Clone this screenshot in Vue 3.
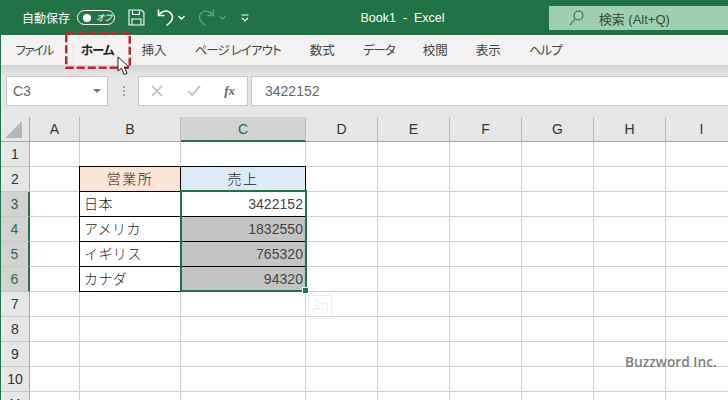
<script setup>
const tabs = [
  { t: 'ファイル', c: 'kana-tight' },
  { t: 'ホーム', c: 'kana active' },
  { t: '挿入', c: '' },
  { t: 'ページ レイアウト', c: 'kana-wide' },
  { t: '数式', c: '' },
  { t: 'データ', c: 'kana' },
  { t: '校閲', c: '' },
  { t: '表示', c: '' },
  { t: 'ヘルプ', c: 'kana' }
]
const cols = [
  { name: 'A', w: 50 }, { name: 'B', w: 101 }, { name: 'C', w: 125 }, { name: 'D', w: 72 },
  { name: 'E', w: 72 }, { name: 'F', w: 72 }, { name: 'G', w: 72 }, { name: 'H', w: 72 }, { name: 'I', w: 72 }
]
const rowNums = [1, 2, 3, 4, 5, 6, 7, 8, 9, 10, 11]
const data = {
  2: { B: { t: '営業所', c: 'head orange' }, C: { t: '売上', c: 'head blue' } },
  3: { B: { t: '日本', c: 'box' }, C: { t: '3422152', c: 'box num' } },
  4: { B: { t: 'アメリカ', c: 'box' }, C: { t: '1832550', c: 'box num grey' } },
  5: { B: { t: 'イギリス', c: 'box' }, C: { t: '765320', c: 'box num grey' } },
  6: { B: { t: 'カナダ', c: 'box' }, C: { t: '94320', c: 'box num grey' } }
}
const cell = (r, c) => (data[r] && data[r][c]) || { t: '', c: '' }
const gridCols = '29px ' + cols.map(c => c.w + 'px').join(' ')
</script>

<template>
  <div class="app">
    <div class="titlebar">
      <span class="autosave">自動保存</span>
      <span class="toggle"><i class="dot"></i><em>オフ</em></span>
      <svg class="save" width="17" height="17" viewBox="0 0 17 17" fill="none" stroke="#fff" stroke-width="1.1">
        <path d="M1 1h12.5L16 3.5V16H1z" />
        <path d="M4.5 1v4.5h7V1M4 16v-6h9v6" />
      </svg>
      <svg class="undo" width="18" height="19" viewBox="0 0 18 19" fill="none" stroke="#fff" stroke-width="1.5">
        <path d="M1.5 1.5v6h6" />
        <path d="M1.5 7.5C4 3.5 9 2 12.500 4c4 2.500 4 8 0 11l-3 2.500" />
      </svg>
      <svg class="chev" width="7" height="5" viewBox="0 0 7 5" fill="none" stroke="#fff" stroke-width="1.300"><path d="M.5 1l3 3 3-3" /></svg>
      <svg class="redo" width="18" height="19" viewBox="0 0 18 19" fill="none" stroke="#5f9d7c" stroke-width="1.300">
        <path d="M16.500 1.500v6h-6" />
        <path d="M16.500 7.500C14 3.500 9 2 5.500 4c-4 2.500-4 8 0 11l3 2.500" />
      </svg>
      <svg class="chev dim" width="7" height="5" viewBox="0 0 7 5" fill="none" stroke="#5f9d7c" stroke-width="1.300"><path d="M.5 1l3 3 3-3" /></svg>
      <svg class="custom" width="8" height="8" viewBox="0 0 8 8" fill="none" stroke="#fff" stroke-width="1.200"><path d="M.5 1h7M1 4l3 3 3-3" /></svg>
      <span class="doc">Book1 &nbsp;-&nbsp; Excel</span>
      <div class="search">
        <svg width="15" height="16" viewBox="0 0 15 16" fill="none" stroke="#2f5f45" stroke-width="1.100">
          <circle cx="9.500" cy="5.500" r="4.500" /><path d="M6 9l-5 6" />
        </svg>
        <span>検索 (Alt+Q)</span>
      </div>
    </div>

    <div class="tabs">
      <span v-for="tab in tabs" :key="tab.t" class="tab" :class="tab.c">{{ tab.t }}</span>
    </div>
    <div class="shade"></div>

    <div class="formula">
      <div class="namebox">
        <span>C3</span>
        <i class="caret"></i>
      </div>
      <div class="grip"><i></i><i></i><i></i></div>
      <div class="fbtns">
        <svg width="12" height="12" viewBox="0 0 12 12" stroke="#c6c6c6" stroke-width="1.800"><path d="M1 1l10 10M11 1L1 11" /></svg>
        <svg width="14" height="12" viewBox="0 0 14 12" fill="none" stroke="#c6c6c6" stroke-width="2.200"><path d="M1 6l4 4 8-9" /></svg>
        <span class="fx">fx</span>
      </div>
      <div class="finput">3422152</div>
    </div>

    <div class="sheet" :style="{ gridTemplateColumns: gridCols }">
      <div class="corner"><i></i></div>
      <div v-for="c in cols" :key="c.name" class="colhead" :class="{ sel: c.name === 'C' }">{{ c.name }}</div>
      <template v-for="r in rowNums" :key="r">
        <div class="rowhead" :class="{ sel: r >= 3 && r <= 6 }">{{ r }}</div>
        <div v-for="c in cols" :key="c.name" class="cell" :class="cell(r, c.name).c">{{ cell(r, c.name).t }}</div>
      </template>
      <div class="selection"><i class="handle"></i></div>
      <svg class="paste" width="24" height="24" viewBox="0 0 24 24" fill="none" stroke="#ececec">
        <path d="M.5.500h23v23H.5z" />
        <path d="M7 5h3l1 3h8v11H5v-5h3v-3h4M8 14h8M7 5v6" />
      </svg>
    </div>

    <svg class="marker" width="66" height="37" viewBox="0 0 66 37" fill="none" stroke="#bb2630" stroke-width="2.500" stroke-dasharray="8 3">
      <rect x="1.250" y="1.250" width="63.500" height="34.500" />
    </svg>
    <svg class="cursor" width="14" height="21" viewBox="0 0 14 21">
      <path d="M1 1v14l3.500-3 2.500 6.500 3-1.200-2.700-6.300H12z" fill="#fff" stroke="#222" stroke-width="1" />
    </svg>
    <div class="credit">Buzzword Inc.</div>
  </div>
</template>

<style scoped>
.app {
  position: relative;
  width: 728px;
  height: 400px;
  overflow: hidden;
  background: #fff;
  font-family: "Liberation Sans", "Noto Sans CJK JP", sans-serif;
  color: #333;
}
.titlebar {
  display: flex;
  align-items: center;
  height: 35px;
  padding-left: 22px;
  background: #217346;
  color: #fff;
}
.autosave {
  width: 55px;
  flex: none;
  font-family: "Noto Sans CJK JP", sans-serif;
  font-size: 12px;
  white-space: nowrap;
}
.toggle {
  display: flex;
  align-items: center;
  width: 38px;
  height: 15px;
  box-sizing: border-box;
  border: 1px solid #fff;
  border-radius: 8px;
  padding-left: 5px;
}
.dot {
  width: 8px;
  height: 8px;
  border-radius: 50%;
  background: #fff;
}
.toggle em {
  margin-left: 5px;
  font-family: "Noto Sans CJK JP", sans-serif;
  font-size: 9px;
  font-feature-settings: "palt";
  white-space: nowrap;
}
.save { margin-left: 13px; }
.undo { margin-left: 12px; }
.chev { margin-left: 3px; }
.redo { margin-left: 12px; }
.chev.dim { margin-left: 4px; }
.custom { margin-left: 15px; }
.doc {
  width: 301px;
  padding: 1px 0 0 112px;
  box-sizing: border-box;
  font-size: 12.5px;
  white-space: nowrap;
}
.search {
  display: flex;
  align-items: center;
  gap: 15px;
  width: 180px;
  height: 24px;
  align-self: flex-start;
  margin-top: 6px;
  padding-left: 20px;
  box-sizing: border-box;
  background: #a0cfb0;
  color: #2f4f3c;
  font-size: 13px;
  white-space: nowrap;
}
.tabs {
  display: flex;
  height: 30px;
  padding-left: 0.500px;
  border-left: 1px solid #217346;
  background: #f3f2f1;
}
.tab {
  padding: 0 14px;
  line-height: 30px;
  font-family: "Noto Sans CJK JP", sans-serif;
  font-size: 12.500px;
  font-feature-settings: "palt";
  color: #444;
  white-space: nowrap;
}
.tab.kana { letter-spacing: -1px; }
.tab.kana-tight { letter-spacing: -1.500px; }
.tab.kana-wide {
  letter-spacing: -0.900px;
  margin-right: 1px;
}
.tab.active {
  font-weight: 700;
  color: #222;
}
.shade {
  height: 11px;
  border-left: 1px solid #217346;
  background: linear-gradient(#d4d4d4, #e6e6e6);
}
.formula {
  display: flex;
  height: 41px;
  padding-left: 5px;
  border-left: 1px solid #217346;
  background: #e6e6e6;
  box-sizing: border-box;
}
.namebox {
  display: flex;
  align-items: center;
  justify-content: space-between;
  width: 102px;
  height: 30px;
  box-sizing: border-box;
  padding: 0 6px 0 6px;
  background: #fff;
  border: 1px solid #c8c8c8;
  color: #666;
  font-size: 14px;
}
.caret {
  border-left: 4px solid transparent;
  border-right: 4px solid transparent;
  border-top: 4px solid #777;
}
.grip {
  display: flex;
  flex-direction: column;
  gap: 2px;
  width: 30px;
  padding: 10px 0 0 15px;
  box-sizing: border-box;
}
.grip i {
  width: 2px;
  height: 2px;
  background: #aaa;
}
.fbtns {
  display: flex;
  align-items: center;
  justify-content: space-between;
  width: 110px;
  height: 30px;
  box-sizing: border-box;
  padding: 0 12px 0 12px;
  background: #fff;
  border: 1px solid #c8c8c8;
}
.fx {
  font-family: "Liberation Serif", serif;
  font-style: italic;
  font-weight: 700;
  font-size: 13px;
  color: #666;
}
.finput {
  flex: 1;
  height: 30px;
  margin-left: 3px;
  padding-left: 13px;
  box-sizing: border-box;
  background: #fff;
  border: 1px solid #c8c8c8;
  border-right: none;
  line-height: 28px;
  color: #666;
  font-size: 14px;
}
.sheet {
  position: relative;
  display: grid;
  grid-template-rows: repeat(12, 25px);
  border-left: 1px solid #217346;
  width: 727px;
}
.corner, .colhead, .rowhead {
  background: #e6e6e6;
  box-sizing: border-box;
  font-size: 14px;
  color: #333;
}
.corner {
  display: flex;
  align-items: center;
  justify-content: center;
  border-right: 1px solid #a8a8a8;
  border-bottom: 1px solid #a8a8a8;
}
.corner i {
  width: 0;
  height: 0;
  margin-left: -3px;
  border-left: 17px solid transparent;
  border-bottom: 17px solid #b6b6b6;
}
.colhead {
  display: flex;
  align-items: center;
  justify-content: center;
  border-right: 1px solid #bcbcbc;
  border-bottom: 1px solid #a8a8a8;
}
.colhead.sel {
  background: #d2d2d2;
  color: #2c6a4a;
  border-bottom: 2px solid #217346;
}
.rowhead {
  display: flex;
  align-items: center;
  justify-content: center;
  border-right: 1px solid #a8a8a8;
  border-bottom: 1px solid #c8c8c8;
}
.rowhead.sel {
  background: #d2d2d2;
  color: #2c6a4a;
  border-right: 2px solid #217346;
}
.cell {
  box-sizing: border-box;
  border-right: 1px solid #d0d0d0;
  border-bottom: 1px solid #d0d0d0;
  padding: 0 4px;
  line-height: 24px;
  font-size: 14px;
  font-weight: 300;
  letter-spacing: 0.4px;
  color: #222;
  white-space: nowrap;
  overflow: hidden;
}
.box {
  border-right: 1px solid #000;
  border-bottom: 1px solid #000;
  box-shadow: -1px 0 0 #000;
}
.head {
  border: 1px solid #000;
  border-left: none;
  border-top: none;
  box-shadow: -1px 0 0 #000, 0 -1px 0 #000, -1px -1px 0 #000;
  text-align: center;
  letter-spacing: 1.500px;
}
.orange { background: #fce4d6; }
.blue { background: #ddebf7; }
.num {
  text-align: right;
  padding-right: 2px;
  letter-spacing: 0.05px;
  color: #444;
}
.grey { background: #c4c4c4; }
.selection {
  position: absolute;
  left: 179px;
  top: 73px;
  width: 127px;
  height: 102px;
  box-sizing: border-box;
  border: 2px solid #217346;
  pointer-events: none;
}
.handle {
  position: absolute;
  right: -4px;
  bottom: -4px;
  width: 5px;
  height: 5px;
  background: #217346;
  border: 1px solid #fff;
}
.paste {
  position: absolute;
  left: 307px;
  top: 178px;
}
.marker {
  position: absolute;
  left: 65px;
  top: 32px;
}
.cursor {
  position: absolute;
  left: 117px;
  top: 56px;
}
.credit {
  position: absolute;
  left: 625px;
  top: 352px;
  font-family: "Open Sans", sans-serif;
  font-size: 13.700px;
  font-weight: 600;
  color: #808080;
}
</style>
